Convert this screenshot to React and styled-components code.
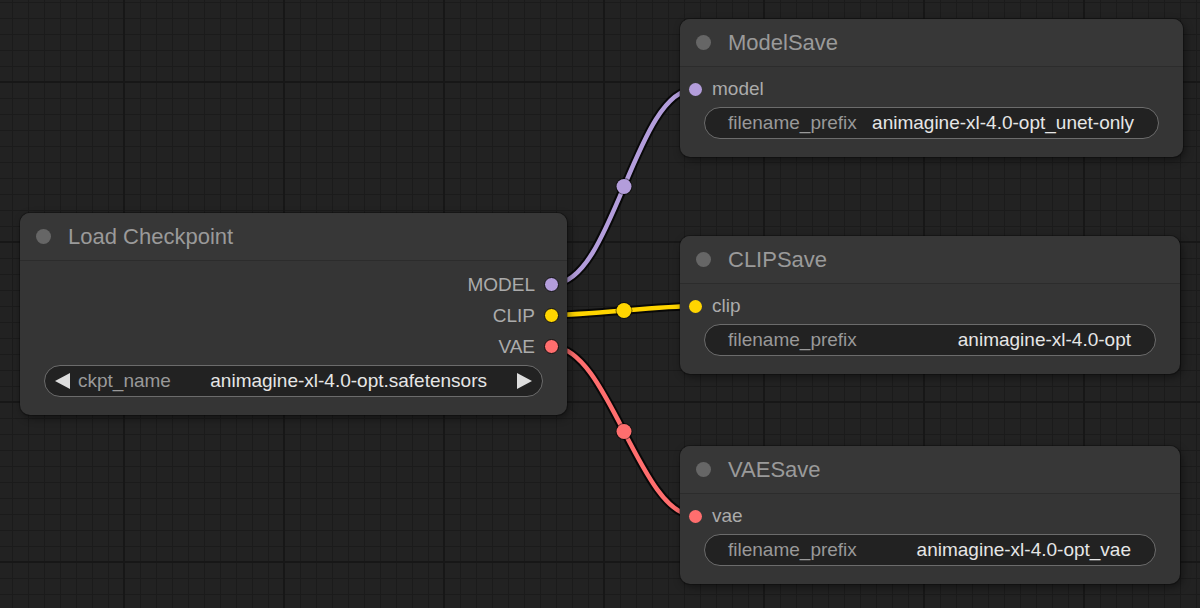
import React from "react";
import styled, { createGlobalStyle } from "styled-components";

const Global = createGlobalStyle`
  html, body { margin: 0; padding: 0; background: #222; }
  body { font-family: "Liberation Sans", Arial, sans-serif; }
  * { box-sizing: border-box; }
`;

const Canvas = styled.div`
  position: relative;
  width: 1200px;
  height: 608px;
  overflow: hidden;
  background-color: #222222;
  background-image:
    linear-gradient(to right, #171717 2px, transparent 2px),
    linear-gradient(to bottom, #171717 2px, transparent 2px),
    linear-gradient(to right, #1b1b1b 1px, transparent 1px),
    linear-gradient(to bottom, #1b1b1b 1px, transparent 1px);
  background-size: 160px 160px, 160px 160px, 16px 16px, 16px 16px;
  background-position: 123px 81px, 123px 81px, 124px 82px, 124px 82px;
`;

const Links = styled.svg`
  position: absolute;
  left: 0;
  top: 0;
  width: 1200px;
  height: 608px;
  pointer-events: none;
`;

const Node = styled.div`
  position: absolute;
  left: ${(p) => p.$x}px;
  top: ${(p) => p.$y}px;
  width: ${(p) => p.$w}px;
  background: #353535;
  border-radius: 10px;
  box-shadow: 0 0 0 1px rgba(0, 0, 0, 0.25), 2px 3px 8px rgba(0, 0, 0, 0.45);
  overflow: hidden;
`;

const Title = styled.div`
  height: 48px;
  display: flex;
  align-items: center;
  gap: 17px;
  padding-left: 16px;
  background: #373737;
  border-bottom: 1px solid #2c2c2c;
  color: #9a9a9a;
  font-size: 22px;
`;

const TitleDot = styled.span`
  width: 15px;
  height: 15px;
  border-radius: 50%;
  background: #666;
  flex: none;
`;

const Body = styled.div`
  padding: ${(p) => p.$top}px 0 18px;
  display: flex;
  flex-direction: column;
`;

const OutputRow = styled.div`
  height: 31px;
  display: flex;
  align-items: center;
  justify-content: flex-end;
  gap: 9px;
  padding-right: 8px;
  color: #ababab;
  font-size: 19px;
`;

const InputRow = styled.div`
  height: 30px;
  display: flex;
  align-items: center;
  gap: 10px;
  padding-left: 9px;
  color: #ababab;
  font-size: 19px;
`;

const Slot = styled.span`
  width: ${(p) => (p.$outlined ? 15 : 13)}px;
  height: ${(p) => (p.$outlined ? 15 : 13)}px;
  border-radius: 50%;
  background: ${(p) => p.$color};
  border: ${(p) => (p.$outlined ? "1.5px solid #111" : "none")};
  flex: none;
`;

const Widget = styled.div`
  margin: 3px 24px 0;
  height: 32px;
  border: 1px solid #6c6c6c;
  border-radius: 16px;
  background: #222;
  display: flex;
  align-items: center;
  padding: 0 ${(p) => (p.$combo ? "10px" : "24px")} 0
    ${(p) => (p.$combo ? "10px" : "23px")};
  font-size: 19px;
  white-space: nowrap;
`;

const WLabel = styled.span`
  color: #999;
  flex: 1;
`;

const WValue = styled.span`
  color: #e6e6e6;
  margin-right: ${(p) => p.$mr || 0}px;
`;

const Arrow = styled.svg`
  width: 15px;
  height: 16px;
  flex: none;
  margin-right: ${(p) => p.$mr || 0}px;
`;

const COLORS = { MODEL: "#b39ddb", CLIP: "#ffd500", VAE: "#ff6e6e" };

function link(x1, y1, x2, y2) {
  const d = Math.hypot(x2 - x1, y2 - y1) * 0.25;
  return {
    d: `M${x1} ${y1} C${x1 + d} ${y1} ${x2 - d} ${y2} ${x2} ${y2}`,
    mx: (x1 + 3 * (x1 + d) + 3 * (x2 - d) + x2) / 8,
    my: (y1 + y2) / 2,
  };
}

const LINKS = [
  { c: COLORS.MODEL, ...link(553, 284, 695, 89) },
  { c: COLORS.CLIP, ...link(553, 315, 695, 306) },
  { c: COLORS.VAE, ...link(553, 347, 695, 516) },
];

function SaveNode({ x, y, w, title, input, color, value }) {
  return (
    <Node $x={x} $y={y} $w={w}>
      <Title>
        <TitleDot />
        {title}
      </Title>
      <Body $top={7}>
        <InputRow>
          <Slot $color={color} />
          {input}
        </InputRow>
        <Widget>
          <WLabel>filename_prefix</WLabel>
          <WValue>{value}</WValue>
        </Widget>
      </Body>
    </Node>
  );
}

export default function App() {
  return (
    <>
      <Global />
      <Canvas>
        <Links viewBox="0 0 1200 608">
          {LINKS.map((l, i) => (
            <g key={i}>
              <path d={l.d} fill="none" stroke="rgba(0,0,0,0.75)" strokeWidth="8.5" />
              <path d={l.d} fill="none" stroke={l.c} strokeWidth="4.5" />
              <circle cx={l.mx} cy={l.my} r="8.5" fill="rgba(0,0,0,0.5)" />
              <circle cx={l.mx} cy={l.my} r="7.5" fill={l.c} />
            </g>
          ))}
        </Links>

        <Node $x={20} $y={213} $w={547}>
          <Title>
            <TitleDot />
            Load Checkpoint
          </Title>
          <Body $top={8}>
            {["MODEL", "CLIP", "VAE"].map((n) => (
              <OutputRow key={n}>
                {n}
                <Slot $outlined $color={COLORS[n]} />
              </OutputRow>
            ))}
            <Widget $combo>
              <Arrow viewBox="0 0 15 16" $mr={8}>
                <polygon points="15,0 15,16 0,8" fill="#dedede" />
              </Arrow>
              <WLabel>ckpt_name</WLabel>
              <WValue $mr={30}>animagine-xl-4.0-opt.safetensors</WValue>
              <Arrow viewBox="0 0 15 16">
                <polygon points="0,0 0,16 15,8" fill="#dedede" />
              </Arrow>
            </Widget>
          </Body>
        </Node>

        <SaveNode
          x={680}
          y={19}
          w={503}
          title="ModelSave"
          input="model"
          color={COLORS.MODEL}
          value="animagine-xl-4.0-opt_unet-only"
        />
        <SaveNode
          x={680}
          y={236}
          w={500}
          title="CLIPSave"
          input="clip"
          color={COLORS.CLIP}
          value="animagine-xl-4.0-opt"
        />
        <SaveNode
          x={680}
          y={446}
          w={500}
          title="VAESave"
          input="vae"
          color={COLORS.VAE}
          value="animagine-xl-4.0-opt_vae"
        />
      </Canvas>
    </>
  );
}
